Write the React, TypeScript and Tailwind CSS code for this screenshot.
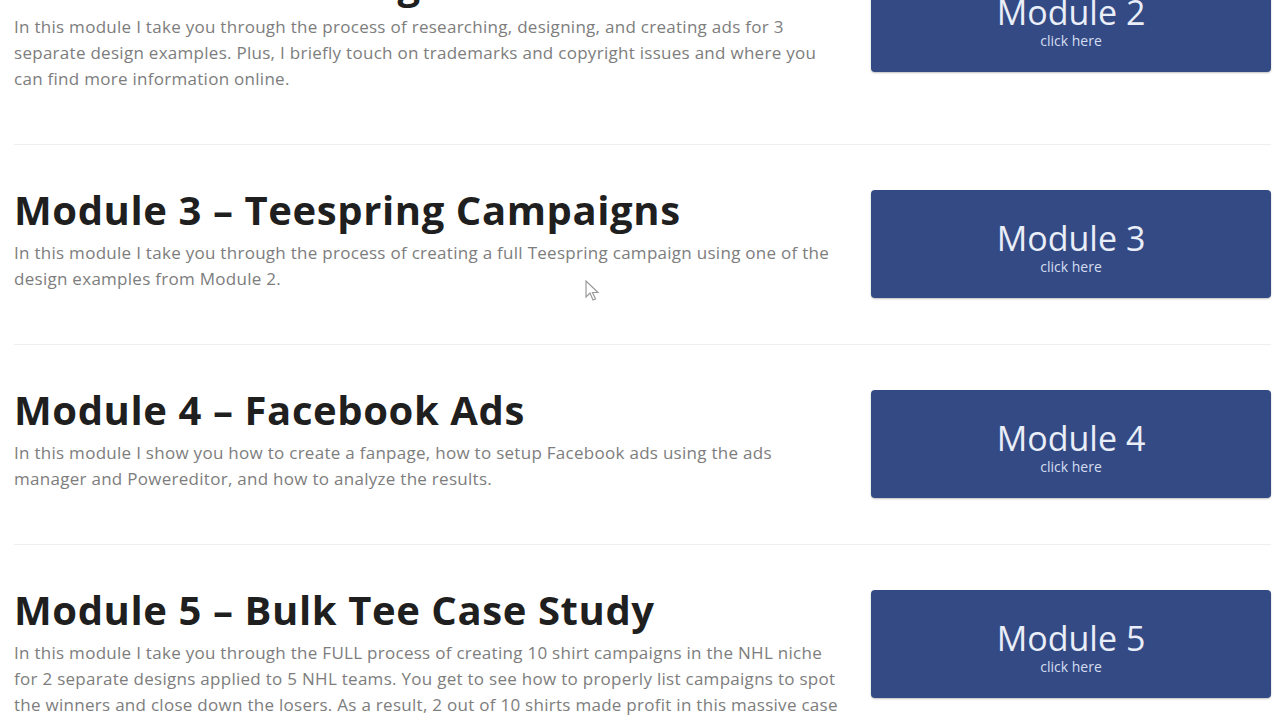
import type { ReactNode } from 'react'

type Module = {
  num: number
  title: string
  body: ReactNode
}

const modules: Module[] = [
  {
    num: 2,
    title: 'Module 2 – Ad Design',
    body: 'In this module I take you through the process of researching, designing, and creating ads for 3 separate design examples. Plus, I briefly touch on trademarks and copyright issues and where you can find more information online.',
  },
  {
    num: 3,
    title: 'Module 3 – Teespring Campaigns',
    body: 'In this module I take you through the process of creating a full Teespring campaign using one of the design examples from Module 2.',
  },
  {
    num: 4,
    title: 'Module 4 – Facebook Ads',
    body: 'In this module I show you how to create a fanpage, how to setup Facebook ads using the ads manager and Powereditor, and how to analyze the results.',
  },
  {
    num: 5,
    title: 'Module 5 – Bulk Tee Case Study',
    body: 'In this module I take you through the FULL process of creating 10 shirt campaigns in the NHL niche for 2 separate designs applied to 5 NHL teams. You get to see how to properly list campaigns to spot the winners and close down the losers. As a result, 2 out of 10 shirts made profit in this massive case study.',
  },
]

function ModuleButton({ num }: { num: number }) {
  return (
    <a
      href="#"
      className="block h-[108px] w-[400px] shrink-0 rounded-[4px] bg-[#344a84] pt-[30px] text-center text-[#e9eef8] shadow-[0_1px_2px_rgba(0,0,0,0.25)]"
    >
      <div className="text-[34px] font-medium leading-[36px]">Module {num}</div>
      <div className="mt-[3px] text-[14px] leading-[16px] text-[#d5def0]">click here</div>
    </a>
  )
}

export default function App() {
  return (
    <div className="relative h-[720px] overflow-hidden bg-white font-['Open_Sans',sans-serif]">
      <div className="mt-[-82px] pl-[14px] pr-[9px]">
        {modules.map((m) => (
          <section key={m.num} className="flex items-start border-t border-[#efefef] pb-[46px] pt-[45px]">
            <div className="mb-[6px] min-w-0 flex-1 pr-[30px]">
              <h2 className="text-[40px] font-bold leading-[40px] tracking-[0.6px] text-[#1f1f1f]">{m.title}</h2>
              <p className="mt-[10px] text-[17px] leading-[26px] tracking-[0.28px] text-[#7d7d7d]">{m.body}</p>
            </div>
            <ModuleButton num={m.num} />
          </section>
        ))}
      </div>

      <svg
        className="absolute left-[585px] top-[280px]"
        width="16"
        height="22"
        viewBox="0 0 16 22"
        aria-hidden
      >
        <path d="M1 1 L1 17 L5 13 L8 20 L10.5 19 L7.5 12.5 L13 12.5 Z" fill="#fff" stroke="#9a9a9a" strokeWidth="1.2" />
      </svg>
    </div>
  )
}
